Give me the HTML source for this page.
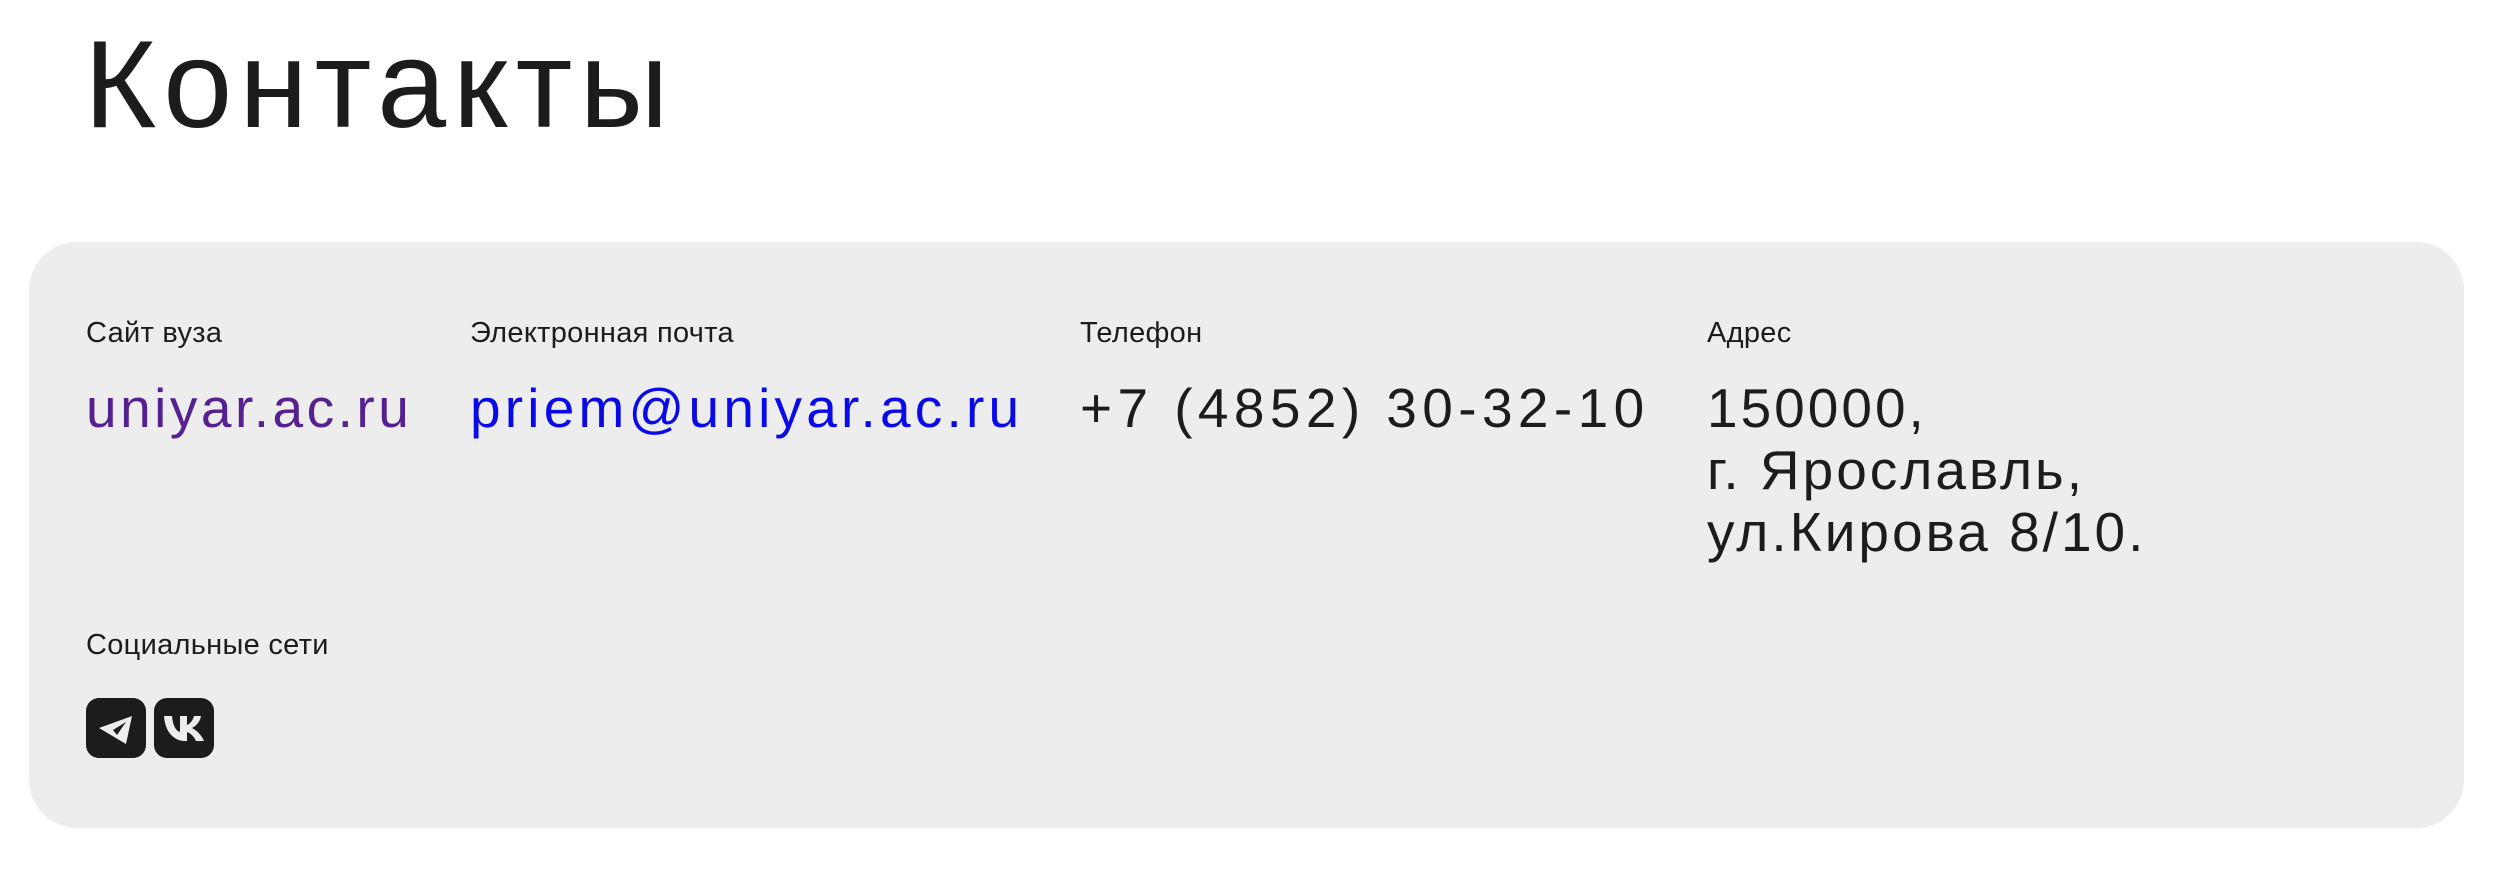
<!DOCTYPE html>
<html><head><meta charset="utf-8">
<style>
html,body{margin:0;padding:0;background:#fff;}
body{width:2509px;height:869px;position:relative;overflow:hidden;font-family:"Liberation Sans",sans-serif;color:#1c1c1c;}
h1{position:absolute;left:84px;top:10px;margin:0;font-weight:400;font-size:124px;line-height:150px;letter-spacing:7px;}
.card{position:absolute;left:29px;top:242px;width:2435px;height:586px;background:#ededed;border-radius:48px;}
.lbl{position:absolute;font-size:29px;line-height:30px;top:318px;letter-spacing:0.3px;}
.val{position:absolute;font-size:55px;line-height:62px;top:377px;}
.ic{position:absolute;top:698px;width:60px;height:60px;border-radius:13px;background:#1c1c1c;}
</style></head><body>
<h1>Контакты</h1>
<div class="card"></div>
<div class="lbl" style="left:86px">Сайт вуза</div>
<div class="lbl" style="left:470px">Электронная почта</div>
<div class="lbl" style="left:1080px">Телефон</div>
<div class="lbl" style="left:1707px">Адрес</div>
<div class="val" style="left:86px;color:#55208f;letter-spacing:3.5px">uniyar.ac.ru</div>
<div class="val" style="left:470px;color:#0a0ae8;letter-spacing:4.2px">priem@uniyar.ac.ru</div>
<div class="val" style="left:1080px;letter-spacing:5.4px">+7 (4852) 30-32-10</div>
<div class="val" style="left:1707px;letter-spacing:3px">150000,<br>г. Ярославль,<br>ул.Кирова 8/10.</div>
<div class="lbl" style="left:86px;top:630px">Социальные сети</div>
<div class="ic" style="left:86px"><svg width="60" height="60" viewBox="0 0 60 60"><path d="M13 30 L46 18 L40 46 Z" fill="#ededed"/><path d="M27 32 L40 24 L31 37 Z" fill="#1c1c1c"/></svg></div>
<div class="ic" style="left:154px"><svg width="60" height="60" viewBox="0 0 60 60"><path d="M10 18 H18 C19 28 22 33 26 34 V18 H33 V27 C36 26 39 22 40 18 H47 C46 24 42 28 38 30 C42 32 47 36 50 43 H42 C40 38 36 35 33 34 V43 H31 C20 43 11 34 10 18 Z" fill="#ededed"/></svg></div>
</body></html>
